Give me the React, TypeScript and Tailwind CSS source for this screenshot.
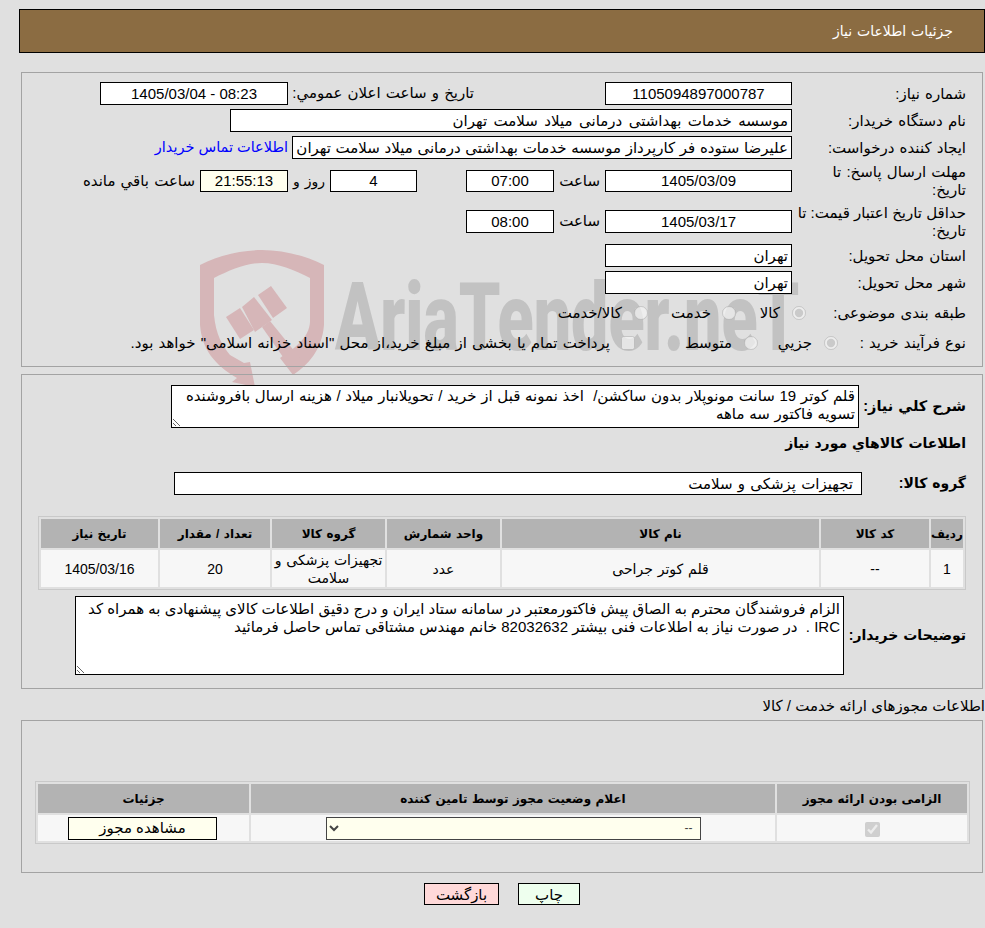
const font = "font-['Liberation_Sans','DejaVu_Sans',sans-serif]";

function Field({ value, short, className = "" }: { value: string; short?: boolean; className?: string }) {
  return (
    <input
      readOnly
      value={value}
      className={`${short ? "h-[22px]" : "h-[23px]"} border border-black px-[3px] text-[15px] text-black outline-none ${className}`}
    />
  );
}

function Label({ children }: { children: React.ReactNode }) {
  return <div className="w-[174px] shrink-0 text-[15px] leading-[18px]">{children}</div>;
}

function Radio({ checked }: { checked?: boolean }) {
  return <input type="radio" disabled defaultChecked={checked} className="m-0 h-[14px] w-[14px] shrink-0" />;
}

function Th({ children, w }: { children: React.ReactNode; w: string }) {
  return <th className={`${w} h-[29px] bg-[#b3b3b3] p-0 text-center text-[12px] font-bold`}>{children}</th>;
}

function Td({ children }: { children: React.ReactNode }) {
  return <td className="bg-[#f7f7f7] p-0 text-center align-middle text-[14px] leading-[18px]">{children}</td>;
}

function Watermark() {
  return (
    <div dir="ltr" className="pointer-events-none absolute left-[200px] top-[250px] flex items-start">
      <svg width="126" height="140" viewBox="0 0 126 140" fill="#d6b6b8" className="shrink-0">
        <path d="M0 15 C20 5 42 0 62 0 C82 0 104 5 124 15 V75 C122 100 108 115 93 125 L80 108 C95 98 109 88 110 72 V28 C94 20 78 13 62 13 C46 13 30 20 14 28 V65 C16 85 22 95 30 105 L44 113 L50 112 L55 137 L32 132 L37 128 C15 115 2 100 0 75 Z" />
        <path d="M26 67 L40 58 L54 80 L40 89 Z" />
        <path d="M42 57 L54 47 L72 70 L55 82 Z" />
        <path d="M58 45 L71 36 L87 58 L73 68 Z" />
        <path d="M62 77 L70 71 L100 108 L90 117 Z" />
      </svg>
      <span className="ml-[9px] mt-[20px] origin-left scale-x-[0.705] whitespace-nowrap font-['Roboto',sans-serif] text-[94px] font-black leading-[96px] text-[#c2c2c2]">
        AriaTender.neT
      </span>
    </div>
  );
}

export default function App() {
  return (
    <div dir="rtl" className={`relative h-[928px] w-[985px] overflow-hidden bg-[#e0e0e0] text-black [word-spacing:1px] ${font}`}>
      <Watermark />
      <div className="relative">
        <div className="ml-[19px] mr-0 mt-[9px] flex h-[44px] items-center border border-black bg-[#8b6c42] pr-[31px] text-[14px] text-white">
          جزئیات اطلاعات نیاز
        </div>

        <section className="ml-[21px] mr-[2px] mt-[19px] h-[295px] border border-[#a3a3a3] pr-[16px] pt-[9px]">
          <div className="flex h-[23px] items-center">
            <Label>شماره نیاز:</Label>
            <Field value="1105094897000787" className="w-[187px] bg-white text-center" />
            <span className="mr-[131px] w-[186px] whitespace-nowrap text-[15px]">تاريخ و ساعت اعلان عمومي:</span>
            <Field value="08:23 - 1405/03/04" className="w-[188px] bg-white text-center" />
          </div>
          <div className="mt-[4px] flex h-[23px] items-center">
            <Label>نام دستگاه خریدار:</Label>
            <Field value="موسسه خدمات بهداشتی درمانی میلاد سلامت تهران" className="w-[562px] bg-white [word-spacing:2.3px]" />
          </div>
          <div className="mt-[4px] flex h-[23px] items-center">
            <Label>ایجاد کننده درخواست:</Label>
            <Field value="علیرضا ستوده فر کارپرداز موسسه خدمات بهداشتی درمانی میلاد سلامت تهران" className="w-[500px] bg-white [word-spacing:0.5px]" />
            <a className="mr-[4px] whitespace-nowrap text-[14.5px] text-[#0000ff] [word-spacing:0px]">اطلاعات تماس خریدار</a>
          </div>
          <div className="mt-[5px] flex h-[34px] items-center">
            <Label>مهلت ارسال پاسخ: تا<br />تاریخ:</Label>
            <Field short value="1405/03/09" className="w-[187px] bg-white text-center" />
            <span className="w-[51px] pr-[5px] text-[15px]">ساعت</span>
            <Field short value="07:00" className="w-[88px] bg-white text-center" />
            <span className="w-[49px]" />
            <Field short value="4" className="w-[87px] bg-white text-center" />
            <span className="w-[42px] pr-[5px] text-[14px]">روز و</span>
            <Field short value="21:55:13" className="w-[88px] bg-[#ffffee] text-center" />
            <span className="whitespace-nowrap pr-[5px] text-[15px]">ساعت باقي مانده</span>
          </div>
          <div className="mt-[6px] flex h-[35px] items-center">
            <Label><span className="[word-spacing:0px]">حداقل تاریخ اعتبار قیمت: تا</span><br />تاریخ:</Label>
            <Field value="1405/03/17" className="w-[187px] bg-white text-center" />
            <span className="w-[51px] pr-[5px] text-[15px]">ساعت</span>
            <Field value="08:00" className="w-[88px] bg-white text-center" />
          </div>
          <div className="mt-[5px] flex h-[23px] items-center">
            <Label>استان محل تحویل:</Label>
            <Field value="تهران" className="w-[187px] bg-white" />
          </div>
          <div className="mt-[4px] flex h-[23px] items-center">
            <Label>شهر محل تحویل:</Label>
            <Field value="تهران" className="w-[187px] bg-white" />
          </div>
          <div className="mt-[8px] flex h-[22px] items-center text-[15px]">
            <Label>طبقه بندی موضوعی:</Label>
            <span className="mr-[-14px] flex items-center">
              <Radio checked />
              <span className="mr-[12px] w-[44px]">کالا</span>
              <Radio />
              <span className="mr-[11px] w-[63px]">خدمت</span>
              <Radio />
              <span className="mr-[12px] whitespace-nowrap">کالا/خدمت</span>
            </span>
          </div>
          <div className="mt-[8px] flex h-[22px] items-center text-[15px]">
            <Label>نوع فرآیند خرید :</Label>
            <span className="mr-[-46px] flex items-center">
              <Radio checked />
              <span className="mr-[12px] w-[54px]">جزیي</span>
              <Radio />
              <span className="mr-[12px] w-[97px]">متوسط</span>
              <input type="checkbox" disabled className="m-0 h-[14px] w-[14px] shrink-0" />
              <span className="mr-[11px] whitespace-nowrap">پرداخت تمام یا بخشی از مبلغ خرید،از محل "اسناد خزانه اسلامی" خواهد بود.</span>
            </span>
          </div>
        </section>

        <section className="ml-[21px] mr-[2px] mt-[7px] h-[315px] border border-[#a3a3a3] pr-[16px] pt-[10px]">
          <div className="flex h-[43px] items-center">
            <div className="w-[107px] shrink-0 text-[14.5px] font-bold">شرح كلي نياز:</div>
            <textarea
              readOnly
              dir="rtl"
              defaultValue={"قلم کوتر 19 سانت مونوپلار بدون ساکشن/  اخذ نمونه قبل از خرید / تحویلانبار میلاد / هزینه ارسال بافروشنده تسویه فاکتور سه ماهه"}
              className="h-[43px] w-[688px] border border-black bg-white px-[3px] pt-[1px] text-[15px] leading-[18px] outline-none [word-spacing:0.5px]"
            />
          </div>
          <div className="mt-[6px] h-[18px] text-[14px] font-bold leading-[18px]">اطلاعات كالاهاي مورد نياز</div>
          <div className="mt-[20px] flex h-[23px] items-center">
            <div className="w-[104px] shrink-0 text-[14px] font-bold">گروه کالا:</div>
            <Field value="تجهیزات پزشکی و سلامت" className="w-[688px] bg-white pr-[8px] [word-spacing:1px]" />
          </div>
          <table className="mt-[21px] w-[928px] table-fixed border-separate border-spacing-[2px] border border-[#c9c9c9]">
            <thead>
              <tr>
                <Th w="w-[32px]">ردیف</Th>
                <Th w="w-[108px]">کد کالا</Th>
                <Th w="w-[317px]">نام کالا</Th>
                <Th w="w-[113px]">واحد شمارش</Th>
                <Th w="w-[113px]">گروه کالا</Th>
                <Th w="w-[110px]">تعداد / مقدار</Th>
                <Th w="w-[117px]">تاریخ نیاز</Th>
              </tr>
            </thead>
            <tbody>
              <tr className="h-[37px]">
                <Td>1</Td>
                <Td>--</Td>
                <Td>قلم کوتر جراحی</Td>
                <Td>عدد</Td>
                <Td>تجهیزات پزشکی و سلامت</Td>
                <Td>20</Td>
                <Td>1405/03/16</Td>
              </tr>
            </tbody>
          </table>
          <div className="mt-[6px] flex h-[79px] items-center">
            <div className="w-[122px] shrink-0 text-[14px] font-bold">توضیحات خریدار:</div>
            <textarea
              readOnly
              dir="rtl"
              defaultValue={"الزام فروشندگان محترم به الصاق پیش فاکتورمعتبر در سامانه ستاد ایران و درج دقیق اطلاعات کالای پیشنهادی به همراه کد IRC .  در صورت نیاز به اطلاعات فنی بیشتر 82032632 خانم مهندس مشتاقی تماس حاصل فرمائید"}
              className="h-[79px] w-[769px] border border-black bg-white px-[3px] pt-[3px] text-[15px] leading-[18px] outline-none"
            />
          </div>
        </section>

        <div className="mt-[8px] h-[22px] whitespace-nowrap text-[15px] leading-[18px] [word-spacing:0px]">اطلاعات مجوزهای ارائه خدمت / کالا</div>

        <section className="ml-[21px] mr-[2px] mt-[1px] h-[153px] border border-[#a3a3a3] pr-[12px] pt-[60px]">
          <table className="w-[935px] table-fixed border-separate border-spacing-[2px] border border-[#c9c9c9]">
            <thead>
              <tr>
                <Th w="w-[190px]">الزامی بودن ارائه مجوز</Th>
                <Th w="w-[524px]">اعلام وضعیت مجوز توسط تامین کننده</Th>
                <Th w="w-[211px]">جزئیات</Th>
              </tr>
            </thead>
            <tbody>
              <tr className="h-[26px]">
                <Td>
                  <input type="checkbox" disabled defaultChecked className="m-0 h-[15px] w-[15px] align-middle" />
                </Td>
                <Td>
                  <select disabled className="h-[23px] w-[375px] border border-[#444444] bg-[#ffffee] px-[3px] align-middle text-[12px] text-[#444444] opacity-100">
                    <option>--</option>
                  </select>
                </Td>
                <Td>
                  <button className="mr-[2px] h-[23px] w-[149px] border border-black bg-[#ffffee] align-middle text-[15px]">مشاهده مجوز</button>
                </Td>
              </tr>
            </tbody>
          </table>
        </section>

        <div className="mt-[10px] flex justify-center pl-[19px]">
          <button className="h-[22px] w-[62px] border border-black bg-[#eeffee] text-[15px]">چاپ</button>
          <button className="mr-[19px] h-[22px] w-[75px] border border-black bg-[#ffd9d9] text-[15px]">بازگشت</button>
        </div>
      </div>
    </div>
  );
}
